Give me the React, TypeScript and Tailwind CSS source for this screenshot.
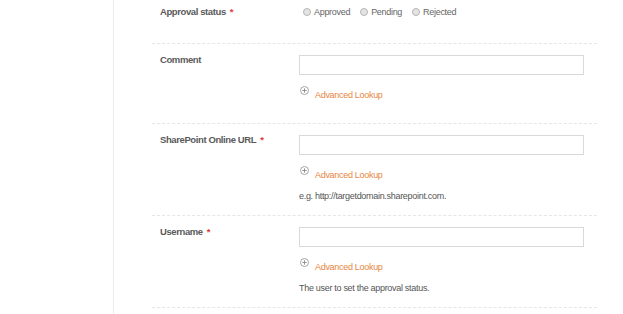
import React, { useState } from "react";

function PlusIcon() {
  return (
    <svg width="9" height="9" viewBox="0 0 9 9" className="shrink-0">
      <circle cx="4.5" cy="4.5" r="4" fill="none" stroke="#9a9a9a" strokeWidth="0.9" />
      <path d="M4.5 2.3v4.4M2.3 4.5h4.4" stroke="#8a8a8a" strokeWidth="0.9" />
    </svg>
  );
}

function Lookup() {
  return (
    <div className="flex items-start h-[14px] mt-[13px]">
      <div className="mt-[-2px] ml-[1px]">
        <PlusIcon />
      </div>
      <a href="#" className="ml-[6px] text-[#e8873f] leading-[14px]">
        Advanced Lookup
      </a>
    </div>
  );
}

function Req() {
  return <span className="text-[#e03a3a] ml-[4px]">*</span>;
}

export default function App() {
  const [status, setStatus] = useState("");
  const [comment, setComment] = useState("");
  const [url, setUrl] = useState("");
  const [user, setUser] = useState("");

  const radio = (value: string, label: string) => (
    <label className="flex items-center mr-[10px] cursor-pointer">
      <span
        onClick={() => setStatus(value)}
        className={
          "w-[8px] h-[8px] rounded-full border border-[#b5b5b5] bg-[#e4e4e4] " +
          (status === value ? "bg-[#888]" : "")
        }
      />
      <span className="ml-[3px] text-[#666]">{label}</span>
    </label>
  );

  return (
    <div
      className="flex w-[623px] h-[314px] bg-white overflow-hidden text-[9px] leading-[14px] tracking-[-0.3px]"
      style={{ fontFamily: '"Liberation Sans", Arial, sans-serif' }}
    >
      <div className="w-[114px] shrink-0 border-r border-[#ececec]" />
      <div className="pl-[38px] w-[483px]">
        <div className="flex pl-[8px] pt-[5px] pb-[24px] border-b border-dashed border-[#e6e6e6]">
          <div className="w-[139px] font-bold text-[#5a5a5a] text-[9.5px] tracking-[-0.4px]">
            Approval status<Req />
          </div>
          <div className="flex items-center pl-[4px]">
            {radio("approved", "Approved")}
            {radio("pending", "Pending")}
            {radio("rejected", "Rejected")}
          </div>
        </div>

        <div className="flex pl-[8px] pt-[9px] pb-[21px] border-b border-dashed border-[#e6e6e6]">
          <div className="w-[139px] font-bold text-[#5a5a5a] text-[9.5px] tracking-[-0.4px]">Comment</div>
          <div className="w-[285px] pt-[2px]">
            <input
              value={comment}
              onChange={(e) => setComment(e.target.value)}
              className="block w-full h-[20px] border border-[#d9d9d9] outline-none px-1"
            />
            <Lookup />
          </div>
        </div>

        <div className="flex pl-[8px] pt-[9px] pb-[12px] border-b border-dashed border-[#e6e6e6]">
          <div className="w-[139px] font-bold text-[#5a5a5a] text-[9.5px] tracking-[-0.4px]">
            SharePoint Online URL<Req />
          </div>
          <div className="w-[285px] pt-[2px]">
            <input
              value={url}
              onChange={(e) => setUrl(e.target.value)}
              className="block w-full h-[20px] border border-[#d9d9d9] outline-none px-1"
            />
            <Lookup />
            <p className="mt-[7px] text-[#555]">e.g. http://targetdomain.sharepoint.com.</p>
          </div>
        </div>

        <div className="flex pl-[8px] pt-[9px] pb-[12px] border-b border-dashed border-[#e6e6e6]">
          <div className="w-[139px] font-bold text-[#5a5a5a] text-[9.5px] tracking-[-0.4px]">
            Username<Req />
          </div>
          <div className="w-[285px] pt-[2px]">
            <input
              value={user}
              onChange={(e) => setUser(e.target.value)}
              className="block w-full h-[20px] border border-[#d9d9d9] outline-none px-1"
            />
            <Lookup />
            <p className="mt-[7px] text-[#555]">The user to set the approval status.</p>
          </div>
        </div>
      </div>
    </div>
  );
}
